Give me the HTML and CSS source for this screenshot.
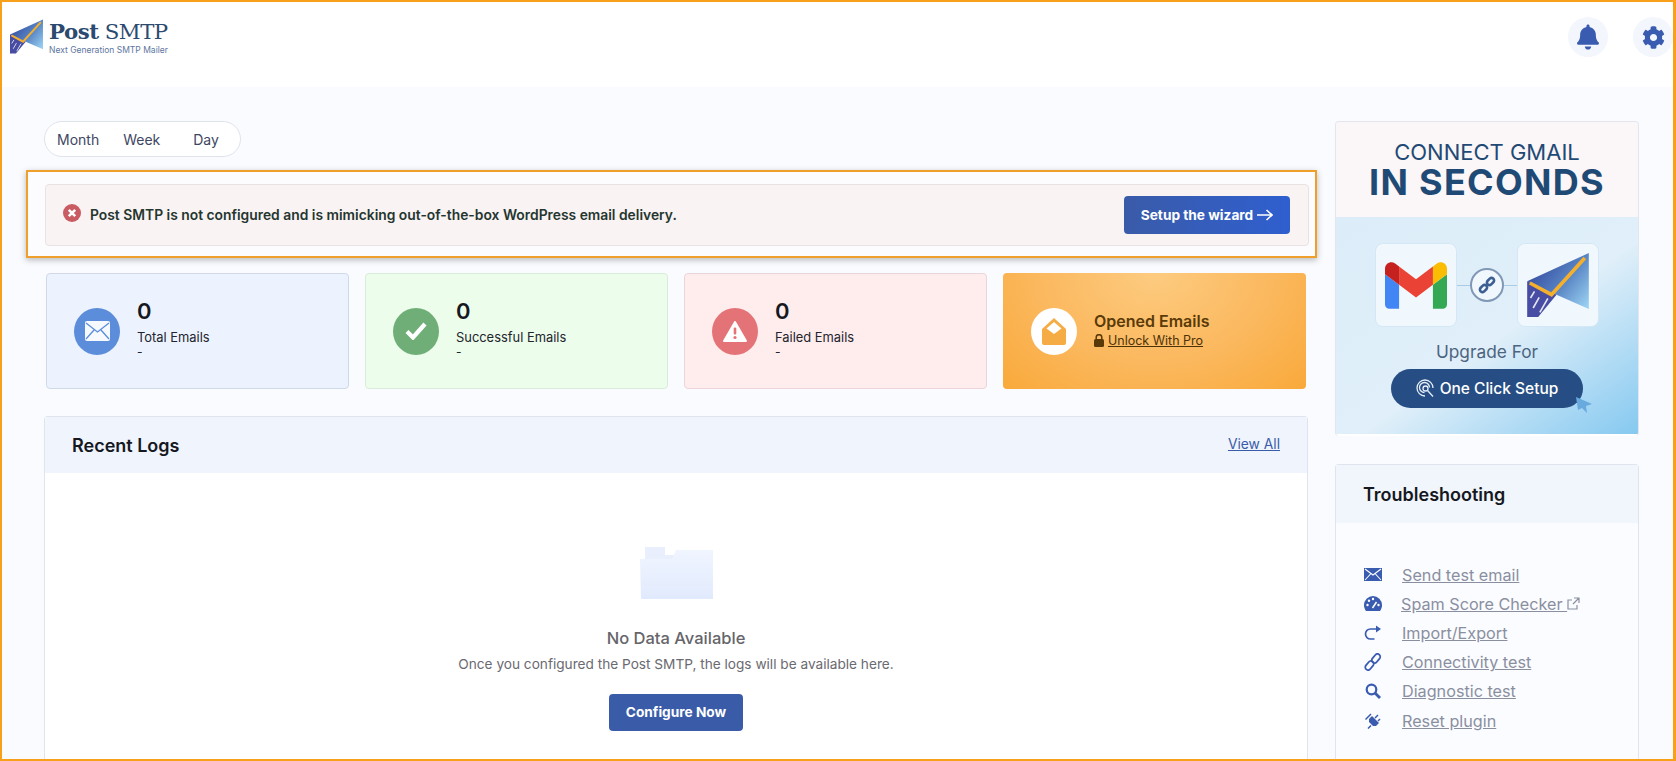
FILE: index.html
```html
<!DOCTYPE html>
<html lang="en">
<head>
    <meta charset="UTF-8">
    <meta name="viewport" content="width=device-width, initial-scale=1.0">
    <title>Post SMTP</title>
    <link rel="stylesheet" href="styles.css">
</head>
<body>

<svg class="defs" width="0" height="0">
    <defs>
        <linearGradient id="planeTop" x1="0" y1="0.3" x2="0.95" y2="1">
            <stop offset="0" stop-color="#34489e"/>
            <stop offset="0.5" stop-color="#5581c2"/>
            <stop offset="1" stop-color="#9bd2f2"/>
        </linearGradient>
        <linearGradient id="folderFill" x1="0" y1="0" x2="0" y2="1">
            <stop offset="0" stop-color="#f0f5ff"/>
            <stop offset="1" stop-color="#e1eafd"/>
        </linearGradient>
        <symbol id="plane" viewBox="0 0 185 192">
            <polygon points="0,85 185,0 185,168 88,125" fill="url(#planeTop)"/>
            <polygon points="0,85 88,125 33,192 0,192" fill="#474da3"/>
            <path d="M18 165l18-32M38 178l24-42M10 135l12-20" stroke="#fff" stroke-width="5" opacity="0.85"/>
            <polyline points="8,90 73,125 173,15" fill="none" stroke="#f4b02c" stroke-width="11"/>
        </symbol>
    </defs>
</svg>

<div class="frame">

    <header class="topbar">
        <a class="logo">
            <svg class="logo-plane"><use href="#plane"/></svg>
            <span class="logo-text">
                <span class="logo-name"><b>Post</b> SMTP</span>
                <span class="logo-sub">Next Generation SMTP Mailer</span>
            </span>
        </a>
        <div class="topbar-icons">
            <span class="round-btn">
                <svg width="22" height="26" viewBox="0 0 448 512" fill="#3a5cb0"><path d="M224 512c35.32 0 63.97-28.65 63.97-64H160.03c0 35.35 28.65 64 63.97 64zm215.39-149.71c-19.32-20.76-55.47-51.99-55.47-154.29 0-77.7-54.48-139.9-127.94-155.16V32c0-17.67-14.32-32-31.98-32s-31.98 14.33-31.98 32v20.84C118.56 68.1 64.08 130.3 64.08 208c0 102.3-36.15 133.53-55.47 154.29-6 6.45-8.66 14.16-8.61 21.71.11 16.4 12.98 32 32.1 32h383.8c19.12 0 32-15.6 32.1-32 .05-7.55-2.61-15.27-8.61-21.71z"/></svg>
            </span>
            <span class="round-btn">
                <svg width="23" height="23" viewBox="0 0 512 512" fill="#3a5cb0"><path d="M487.4 315.7l-42.6-24.6c4.3-23.2 4.3-47 0-70.2l42.6-24.6c4.9-2.8 7.1-8.6 5.5-14-11.1-35.6-30-67.8-54.7-94.6-3.8-4.1-10-5.1-14.8-2.3L380.8 110c-17.9-15.4-38.5-27.3-60.8-35.1V25.8c0-5.6-3.9-10.5-9.4-11.7-36.7-8.2-74.3-7.8-109.2 0-5.5 1.2-9.4 6.1-9.4 11.7V75c-22.2 7.9-42.8 19.8-60.8 35.1L88.7 85.5c-4.9-2.8-11-1.9-14.8 2.3-24.7 26.7-43.6 58.9-54.7 94.6-1.7 5.4.6 11.2 5.5 14L67.3 221c-4.3 23.2-4.3 47 0 70.2l-42.6 24.6c-4.9 2.8-7.1 8.6-5.5 14 11.1 35.6 30 67.8 54.7 94.6 3.8 4.1 10 5.1 14.8 2.3l42.6-24.6c17.9 15.4 38.5 27.3 60.8 35.1v49.2c0 5.6 3.9 10.5 9.4 11.7 36.7 8.2 74.3 7.8 109.2 0 5.5-1.2 9.4-6.1 9.4-11.7v-49.2c22.2-7.9 42.8-19.8 60.8-35.1l42.6 24.6c4.9 2.8 11 1.9 14.8-2.3 24.7-26.7 43.6-58.9 54.7-94.6 1.5-5.5-.7-11.3-5.6-14.1zM256 336c-44.1 0-80-35.9-80-80s35.9-80 80-80 80 35.9 80 80-35.9 80-80 80z"/></svg>
            </span>
        </div>
    </header>

    <main class="content">

        <section class="left">
            <div class="range">
                <span class="range-item">Month</span>
                <span class="range-item">Week</span>
                <span class="range-item">Day</span>
            </div>

            <div class="highlight">
                <div class="alert">
                    <svg class="alert-icon" width="18" height="18" viewBox="0 0 18 18">
                        <circle cx="9" cy="9" r="9" fill="#c95b62"/>
                        <path d="M5.8 5.8l6.4 6.4M12.2 5.8l-6.4 6.4" stroke="#fff" stroke-width="2.6"/>
                    </svg>
                    <p class="alert-text">Post SMTP is not configured and is mimicking out-of-the-box WordPress email delivery.</p>
                    <button class="btn btn-wizard">Setup the wizard
                        <svg width="16" height="12" viewBox="0 0 16 12" fill="none" stroke="#fff" stroke-width="1.6"><path d="M0 6h15M9.5 1l5.5 5-5.5 5"/></svg>
                    </button>
                </div>
            </div>

            <div class="cards">
                <div class="card card-blue">
                    <span class="circle circle-blue">
                        <svg width="25" height="20" viewBox="0 0 25 20"><rect width="25" height="20" rx="2" fill="#fff" opacity="0.95"/><path d="M1 2l11.5 9L24 2M1 18l8-9M24 18l-8-9" fill="none" stroke="#5b8ddb" stroke-width="1.3"/></svg>
                    </span>
                    <div class="card-text">
                        <div class="card-num">0</div>
                        <div class="card-label">Total Emails</div>
                        <div class="card-dash">-</div>
                    </div>
                </div>
                <div class="card card-green">
                    <span class="circle circle-green">
                        <svg width="22" height="18" viewBox="0 0 22 18" fill="none" stroke="#fff" stroke-width="4.2"><path d="M2 9.5l6 6L20 2"/></svg>
                    </span>
                    <div class="card-text">
                        <div class="card-num">0</div>
                        <div class="card-label">Successful Emails</div>
                        <div class="card-dash">-</div>
                    </div>
                </div>
                <div class="card card-red">
                    <span class="circle circle-red">
                        <svg width="24" height="21" viewBox="0 0 24 21"><path d="M12 1L23 20H1z" fill="#fff" stroke="#fff" stroke-width="2" stroke-linejoin="round"/><rect x="10.7" y="6.5" width="2.6" height="7" rx="1" fill="#e47378"/><circle cx="12" cy="16.5" r="1.6" fill="#e47378"/></svg>
                    </span>
                    <div class="card-text">
                        <div class="card-num">0</div>
                        <div class="card-label">Failed Emails</div>
                        <div class="card-dash">-</div>
                    </div>
                </div>
                <div class="card card-orange">
                    <span class="circle circle-white">
                        <svg width="24" height="27" viewBox="0 0 24 27"><path d="M0 11L12 0l12 11v14a2 2 0 0 1-2 2H2a2 2 0 0 1-2-2z" fill="#f6ac45"/><path d="M12 4l7.5 6.5L12 16 4.500 10.500z" fill="#fff"/></svg>
                    </span>
                    <div class="card-text card-text-pro">
                        <div class="card-title">Opened Emails</div>
                        <div class="card-pro">
                            <svg width="10" height="13" viewBox="0 0 10 13" fill="#5a3a08"><rect y="5" width="10" height="8" rx="1.500"/><path d="M2.200 5.500V3.500a2.800 2.800 0 0 1 5.600 0v2" fill="none" stroke="#5a3a08" stroke-width="1.500"/></svg>
                            <a class="pro-link">Unlock With Pro</a>
                        </div>
                    </div>
                </div>
            </div>

            <div class="panel logs">
                <div class="panel-head">
                    <h2>Recent Logs</h2>
                    <a class="view-all">View All</a>
                </div>
                <div class="logs-body">
                    <svg class="folder" width="73" height="52" viewBox="0 0 73 52">
                        <path d="M5 0h20v8h10l-3 4H5z" fill="#e9effd"/>
                        <path d="M0 12h32l4-9h37v49H1z" fill="url(#folderFill)"/>
                    </svg>
                    <h3>No Data Available</h3>
                    <p>Once you configured the Post SMTP, the logs will be available here.</p>
                    <button class="btn btn-configure">Configure Now</button>
                </div>
            </div>
        </section>

        <aside class="side">
            <div class="banner">
                <div class="banner-top">
                    <div class="banner-line1">CONNECT GMAIL</div>
                    <div class="banner-line2">IN SECONDS</div>
                </div>
                <div class="banner-bottom">
                    <div class="tiles">
                        <div class="tile">
                            <svg width="62" height="47" viewBox="52 42 88 66">
                                <path fill="#4285f4" d="M58 108h14V74L52 59v43c0 3.320 2.690 6 6 6"/>
                                <path fill="#34a853" d="M120 108h14c3.320 0 6-2.690 6-6V59l-20 15"/>
                                <path fill="#fbbc04" d="M120 48v26l20-15v-8c0-7.420-8.470-11.650-14.400-7.200"/>
                                <path fill="#ea4335" d="M72 74V48l24 18 24-18v26L96 92"/>
                                <path fill="#c5221f" d="M52 51v8l20 15V48l-5.600-4.200c-5.940-4.450-14.400-.22-14.400 7.200"/>
                            </svg>
                        </div>
                        <div class="connector">
                            <span class="connector-line"></span>
                            <span class="connector-circle">
                                <svg width="18" height="18" viewBox="0 0 18 18" fill="none" stroke="#3d5f92" stroke-width="2.600"><rect x="-4" y="-2.500" width="8" height="5" rx="2.500" transform="translate(5.500 12.500) rotate(-45)"/><rect x="-4" y="-2.500" width="8" height="5" rx="2.500" transform="translate(12.500 5.500) rotate(-45)"/></svg>
                            </span>
                            <span class="connector-line"></span>
                        </div>
                        <div class="tile">
                            <svg width="62" height="64"><use href="#plane"/></svg>
                        </div>
                    </div>
                    <div class="upgrade">Upgrade For</div>
                    <div class="setup-pill">
                        <svg width="19" height="19" viewBox="0 0 19 19" fill="none" stroke="#e6eef8" stroke-width="1.300"><path d="M9 17A8 8 0 1 1 17 9"/><path d="M8.500 13.500A5 5 0 1 1 13.500 8.500"/><circle cx="9.500" cy="9.500" r="2.500"/><path d="M11.500 11.500l5.500 6"/></svg>
                        One Click Setup
                        <svg class="cursor" width="18" height="18" viewBox="0 0 18 18"><path d="M1 1l16 7-6 2 1 7-5-5-4 2z" fill="#68a9de"/></svg>
                    </div>
                </div>
            </div>

            <div class="panel tools">
                <div class="panel-head">
                    <h2>Troubleshooting</h2>
                </div>
                <ul class="tool-list">
                    <li>
                        <svg width="18" height="13" viewBox="0 0 18 13"><rect width="18" height="13" fill="#3a5cb0"/><path d="M1 1l8 6 8-6M1 12l6-6.500M17 12l-6-6.500" fill="none" stroke="#fff" stroke-width="1.100"/></svg>
                        <a>Send test email</a>
                    </li>
                    <li>
                        <svg width="18" height="15" viewBox="0 0 18 15"><path d="M9 0a9 9 0 0 1 9 9c0 2.300-.8 4.300-2 6H2C.8 13.300 0 11.300 0 9a9 9 0 0 1 9-9z" fill="#3a5cb0"/><circle cx="3.500" cy="9" r="1.200" fill="#fff"/><circle cx="5" cy="4.800" r="1.200" fill="#fff"/><circle cx="9" cy="3" r="1.200" fill="#fff"/><circle cx="14.500" cy="9" r="1.200" fill="#fff"/><path d="M8.500 12l4-6" stroke="#fff" stroke-width="1.500"/></svg>
                        <a class="spam">Spam Score Checker <svg width="13" height="13" viewBox="0 0 13 13" fill="none" stroke="#8a8fa0" stroke-width="1.200"><path d="M10 8v4H1V3h4M7 1h5v5M12 1L6 7"/></svg></a>
                    </li>
                    <li>
                        <svg width="17" height="15" viewBox="0 0 17 15" fill="none" stroke="#3a5cb0" stroke-width="1.700"><path d="M12 4H6a5 5 0 0 0 0 10h4"/><path d="M11.500 0.500L16.500 4l-5 3.500z" fill="#3a5cb0" stroke="none"/></svg>
                        <a>Import/Export</a>
                    </li>
                    <li>
                        <svg width="18" height="18" viewBox="0 0 18 18" fill="none" stroke="#3a5cb0" stroke-width="1.800"><rect x="-5" y="-2.800" width="10" height="5.600" rx="2.800" transform="translate(5.500 12.500) rotate(-50)"/><rect x="-5" y="-2.800" width="10" height="5.600" rx="2.800" transform="translate(12 5.500) rotate(-50)"/></svg>
                        <a>Connectivity test</a>
                    </li>
                    <li>
                        <svg width="16" height="16" viewBox="0 0 16 16" fill="none" stroke="#3a5cb0" stroke-width="2.200"><circle cx="6.500" cy="6.500" r="4.800"/><path d="M10 10l5 5" stroke-width="2.800"/></svg>
                        <a>Diagnostic test</a>
                    </li>
                    <li>
                        <svg width="16" height="16" viewBox="0 0 16 16"><path d="M7 3l7 7-3 3H8L4 9V6z" fill="#3a5cb0"/><path d="M0.500 6.500L6 1M3 15.500L6 12.500M10 5l3-3M13 8l2-2" stroke="#3a5cb0" stroke-width="1.500"/></svg>
                        <a>Reset plugin</a>
                    </li>
                </ul>
            </div>
        </aside>

    </main>
</div>

</body>
</html>
```

FILE: styles.css
```css
* {
    box-sizing: border-box;
}

html, body {
    height: 100%;
}

body {
    margin: 0;
    font-family: "Inter", "Liberation Sans", sans-serif;
    color: #1c1f2a;
    background: #fafbfe;
}

.defs {
    position: absolute;
}

.frame {
    display: flex;
    flex-direction: column;
    height: 100vh;
    border: 2px solid #f9a01b;
    border-right-width: 3px;
    overflow: hidden;
}

/* header */
.topbar {
    display: flex;
    flex: none;
    justify-content: space-between;
    height: 85px;
    background: #ffffff;
}

.logo {
    display: flex;
    gap: 6px;
    margin: 17px 0 0 8px;
}

.logo-plane {
    width: 33px;
    height: 35px;
}

.logo-text {
    display: flex;
    flex-direction: column;
}

.logo-name {
    font-family: "DejaVu Serif", serif;
    font-size: 21.3px;
    line-height: 26px;
    letter-spacing: -0.5px;
    color: #2c4a70;
    white-space: nowrap;
}

.logo-sub {
    margin-top: 0;
    font-size: 8.5px;
    line-height: 10px;
    color: #5e76a0;
    white-space: nowrap;
}

.topbar-icons {
    display: flex;
    gap: 25px;
    margin-top: 15px;
}

.round-btn {
    display: flex;
    justify-content: center;
    align-items: center;
    width: 40px;
    height: 40px;
    border-radius: 50%;
    background: #f3f6fd;
}

/* main layout */
.content {
    display: flex;
    flex: 1;
    gap: 27px;
    min-height: 0;
    padding: 34px 34px 0 42px;
}

.left {
    display: flex;
    flex-direction: column;
    width: 1264px;
}

.side {
    display: flex;
    flex-direction: column;
    width: 304px;
}

.range {
    display: flex;
    align-items: center;
    width: 197px;
    height: 36px;
    padding-left: 12px;
    border: 1px solid #dfe3ec;
    border-radius: 18px;
    background: #ffffff;
}

.range-item {
    font-size: 14px;
    color: #3d4663;
}

.range-item:nth-child(2) {
    margin-left: 24px;
}

.range-item:nth-child(3) {
    margin-left: 33px;
}

/* alert */
.highlight {
    margin: 13px -9px 0 -18px;
    padding: 12px 6px 10px 17px;
    border: 2px solid #efa02c;
    box-shadow: 0 2px 6px rgba(60, 60, 60, 0.35);
    background: #fcfcfe;
}

.alert {
    display: flex;
    align-items: center;
    height: 62px;
    padding: 0 18px 0 17px;
    border: 1px solid #e8e2e3;
    border-radius: 4px;
    background: #faf3f3;
}

.alert-icon {
    flex: none;
    margin: -4px 9px 0 0;
}

.alert-text {
    flex: 1;
    margin: 0;
    font-size: 13.85px;
    font-weight: 600;
    color: #24362f;
}

.btn {
    border: none;
    border-radius: 4px;
    color: #ffffff;
    font-family: inherit;
    font-size: 13.7px;
    font-weight: 700;
    cursor: pointer;
}

.btn-wizard {
    display: flex;
    align-items: center;
    justify-content: center;
    gap: 4px;
    width: 166px;
    height: 38px;
    background: linear-gradient(90deg, #3a5ba8, #2f5fcf);
}

/* stat cards */
.cards {
    display: grid;
    grid-template-columns: repeat(4, 303px);
    justify-content: space-between;
    height: 116px;
    margin: 15px 2px 0 2px;
}

.card {
    display: flex;
    align-items: center;
    gap: 17px;
    padding-left: 27px;
    border: 1px solid #cfd9e8;
    border-radius: 4px;
}

.card-blue {
    background: #edf3fe;
}

.card-green {
    background: #ecfdeb;
    border-color: #d9ecdb;
}

.card-red {
    background: #ffecec;
    border-color: #ecd5da;
}

.card-orange {
    border: none;
    background: radial-gradient(ellipse at 50% 0, #fdcb80, #fbb85e 55%, #f9a93a 100%);
    padding-left: 28px;
}

.circle {
    display: flex;
    flex: none;
    justify-content: center;
    align-items: center;
    width: 46px;
    height: 47px;
    border-radius: 50%;
}

.circle-blue {
    background: #5b8ddb;
}

.circle-green {
    background: #70ae78;
}

.circle-red {
    background: #e47378;
}

.circle-white {
    background: #ffffff;
}

.card-text {
    padding-bottom: 8px;
}

.card-text-pro {
    padding-bottom: 3px;
}

.card-num {
    font-size: 22px;
    font-weight: 600;
    line-height: 30px;
    color: #16181f;
}

.card-label {
    margin-top: 4px;
    font-size: 12.9px;
    line-height: 16px;
    color: #23252e;
}

.card-dash {
    font-size: 12px;
    line-height: 12px;
    color: #23252e;
}

.card-title {
    font-size: 16px;
    font-weight: 600;
    line-height: 20px;
    color: #5a3a08;
}

.card-pro {
    display: flex;
    align-items: center;
    gap: 4px;
    margin-top: 2px;
}

.pro-link {
    font-size: 12.5px;
    color: #4d3208;
    text-decoration: underline;
}

/* panels */
.panel {
    display: flex;
    flex: 1;
    flex-direction: column;
    min-height: 0;
    border: 1px solid #e0e4ee;
    border-bottom: none;
    border-radius: 4px 4px 0 0;
}

.panel-head {
    display: flex;
    flex: none;
    justify-content: space-between;
    align-items: center;
    background: #f0f4fd;
}

.panel-head h2 {
    margin: 0;
    font-size: 18px;
    font-weight: 600;
    color: #16181f;
}

.logs {
    margin-top: 27px;
    background: #ffffff;
}

.logs .panel-head {
    height: 56px;
    padding: 0 27px;
}

.view-all {
    margin-top: -2px;
    font-size: 13.8px;
    color: #3a5ca8;
    text-decoration: underline;
}

.logs-body {
    display: flex;
    flex-direction: column;
    align-items: center;
    padding-top: 74px;
}

.logs-body h3 {
    margin: 28px 0 0 0;
    font-size: 16.5px;
    font-weight: 500;
    line-height: 22px;
    color: #65656a;
}

.logs-body p {
    margin: 5px 0 0 0;
    font-size: 13.65px;
    line-height: 20px;
    color: #6a6a70;
}

.btn-configure {
    width: 134px;
    height: 37px;
    margin-top: 20px;
    padding-bottom: 3px;
    background: #3a5ca8;
}

/* banner */
.banner {
    flex: none;
    height: 315px;
    border: 1px solid #e4e6ec;
    border-bottom: none;
    border-radius: 4px;
    background: #ffffff;
    overflow: hidden;
}

.banner-top {
    display: flex;
    flex-direction: column;
    align-items: center;
    height: 95px;
    padding-top: 18px;
    background: #fbf6f7;
    color: #1f4a75;
}

.banner-line1 {
    font-size: 22px;
    line-height: 24px;
}

.banner-line2 {
    font-size: 36px;
    font-weight: 700;
    line-height: 36px;
    letter-spacing: 1.3px;
}

.banner-bottom {
    display: flex;
    flex-direction: column;
    align-items: center;
    height: 217px;
    padding-top: 26px;
    background: linear-gradient(145deg, #dcedf9 0%, #e0eff9 55%, #86c9f0 100%);
}

.tiles {
    display: flex;
    align-items: center;
}

.tile {
    display: flex;
    justify-content: center;
    align-items: center;
    width: 82px;
    height: 84px;
    border: 1px solid #d3e7f6;
    border-radius: 8px;
    background: #f1f8fd;
}

.connector {
    display: flex;
    align-items: center;
    width: 60px;
}

.connector-line {
    flex: 1;
    height: 1px;
    background: #a9cce6;
}

.connector-circle {
    display: flex;
    justify-content: center;
    align-items: center;
    width: 34px;
    height: 34px;
    border: 2px solid #8098b5;
    border-radius: 50%;
    background: #f1f8fd;
}

.upgrade {
    margin-top: 13px;
    font-size: 17.3px;
    line-height: 24px;
    color: #4c6480;
}

.setup-pill {
    position: relative;
    display: flex;
    justify-content: center;
    align-items: center;
    gap: 5px;
    width: 192px;
    height: 39px;
    margin-top: 5px;
    border-radius: 20px;
    background: #264e84;
    color: #ffffff;
    font-size: 15.5px;
    font-weight: 500;
}

.cursor {
    position: absolute;
    right: -10px;
    bottom: -6px;
}

/* troubleshooting */
.tools {
    margin-top: 28px;
    background: #fbfcff;
}

.tools .panel-head {
    height: 58px;
    padding: 0 27px;
    background: #f1f5fc;
}

.tool-list {
    margin: 0;
    padding: 37px 0 0 28px;
    list-style: none;
}

.tool-list li {
    display: flex;
    align-items: center;
    height: 29.2px;
}

.tool-list li > svg {
    flex: none;
    width: 18px;
    margin-right: 20px;
}

.tool-list a {
    font-size: 16.2px;
    color: #8a8fa0;
    text-decoration: underline;
}

.tool-list .spam {
    margin-left: -1px;
}
```
